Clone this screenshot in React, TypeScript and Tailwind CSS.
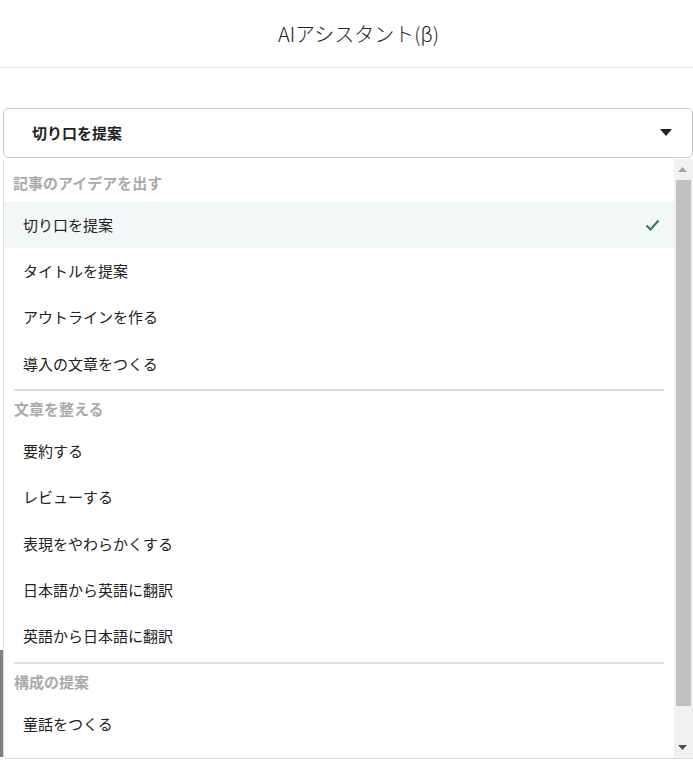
import { FC } from 'react';

type Group = {
    label: string;
    items: string[];
};

const groups: Group[] = [
    {
        label: '記事のアイデアを出す',
        items: ['切り口を提案', 'タイトルを提案', 'アウトラインを作る', '導入の文章をつくる'],
    },
    {
        label: '文章を整える',
        items: ['要約する', 'レビューする', '表現をやわらかくする', '日本語から英語に翻訳', '英語から日本語に翻訳'],
    },
    {
        label: '構成の提案',
        items: ['童話をつくる'],
    },
];

const selected = '切り口を提案';

const App: FC = () => {
    return (
        <div
            className="relative w-[693px] h-[760px] overflow-hidden bg-white text-[#333]"
            style={{ fontFamily: '"Noto Sans CJK JP", "Noto Sans", sans-serif' }}
        >
            {/* ヘッダー */}
            <header className="h-[68px] flex items-center justify-center pl-[24px] border-b border-[#e6e6e6]">
                <h1 className="text-[20px] font-light text-[#222]">AIアシスタント(β)</h1>
            </header>

            {/* 下のエディタ領域 */}
            <div className="mt-[582px] h-[107px] border-l-[3px] border-[#808080]"></div>

            {/* セレクト */}
            <div className="absolute left-[3px] right-0 top-[108px]">
                <button className="w-full h-[50px] flex items-center justify-between pl-[28px] pr-[20px] border border-[#c8c8c8] rounded-[5px] bg-white">
                    <span className="text-[15px] font-bold text-[#222]">{selected}</span>
                    <svg width="12" height="8" viewBox="0 0 12 8">
                        <path d="M0 0 H12 L6 7 Z" fill="#222" />
                    </svg>
                </button>

                {/* ドロップダウン */}
                <div className="mt-[1px] h-[600px] flex border-l border-b border-[#dcdcdc] rounded-bl-[4px] bg-white overflow-hidden">
                    <div className="flex-1 pt-[5px]">
                        {groups.map((group, gi) => (
                            <div key={group.label} className={gi > 0 ? 'mt-[2px] border-t-2 border-[#dcdcdc] mx-[10px]' : ''}>
                                <div
                                    className={`flex items-center text-[15px] font-bold text-[#aaa] ${
                                        gi > 0 ? 'h-[37px]' : 'h-[38px] pl-[9px]'
                                    }`}
                                >
                                    {group.label}
                                </div>
                                {group.items.map((item) => (
                                    <div
                                        key={item}
                                        className={`h-[46.3px] flex items-center justify-between pl-[19px] pr-[14px] text-[15px] text-[#222] ${
                                            gi > 0 ? '-mx-[10px]' : ''
                                        } ${item === selected ? 'bg-[#f2f7f7]' : ''}`}
                                    >
                                        <span>{item}</span>
                                        {item === selected && (
                                            <svg width="15" height="12" viewBox="0 0 15 12">
                                                <path d="M1.5 6.5 L5.5 10.5 L13.5 1.5" stroke="#2e7a62" strokeWidth="2" fill="none" />
                                            </svg>
                                        )}
                                    </div>
                                ))}
                            </div>
                        ))}
                    </div>

                    {/* スクロールバー */}
                    <div className="w-[19px] flex flex-col bg-[#f1f1f1] pr-[2px]">
                        <div className="h-[21px] flex items-center justify-center">
                            <svg width="9" height="5" viewBox="0 0 9 5">
                                <path d="M0 5 H9 L4.5 0 Z" fill="#a3a3a3" />
                            </svg>
                        </div>
                        <div className="h-[526px] ml-[2px] bg-[#c1c1c1]"></div>
                        <div className="flex-1 flex items-end justify-center pb-[8px]">
                            <svg width="9" height="5" viewBox="0 0 9 5">
                                <path d="M0 0 H9 L4.5 5 Z" fill="#505050" />
                            </svg>
                        </div>
                    </div>
                </div>
            </div>
        </div>
    );
};

export default App;
